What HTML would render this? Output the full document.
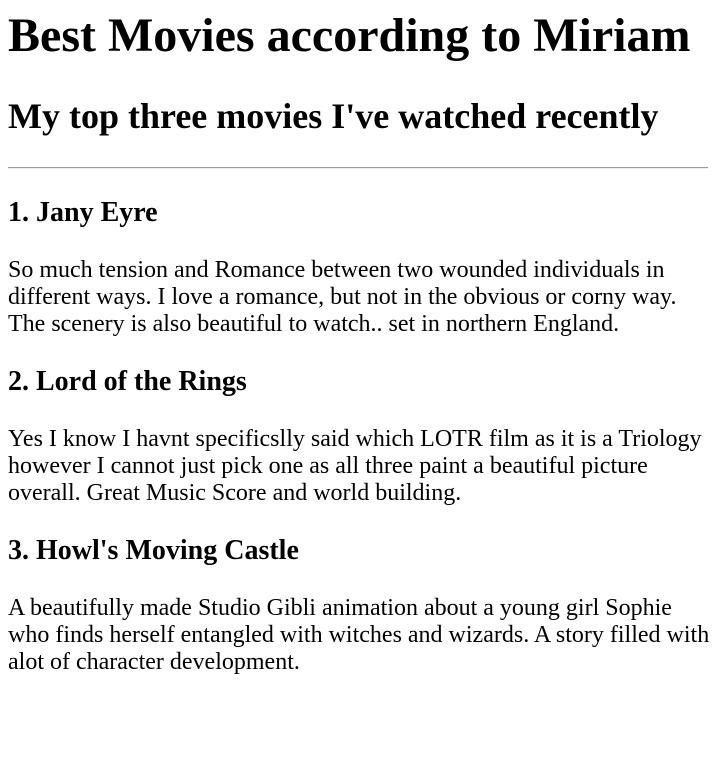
<!DOCTYPE html>
<html><head><meta charset="utf-8"><style>
body{margin:8px 0 8px 8px;font-family:"Times New Roman","Liberation Serif",Times,serif;font-size:24px;color:#000;background:#fff}
h1{font-size:48px;margin:0 0 32px}
h2{font-size:36px;margin:30px 0}
h3{font-size:28px;margin:28px 0}
p{margin:24px 0}
hr{margin:12px 8px 12px 0;border:0;border-top:1px solid #9a9a9a;border-bottom:1px solid #eee;height:0}
</style></head><body>
<h1>Best Movies according to Miriam</h1>
<h2>My top three movies I've watched recently</h2>
<hr>
<h3>1. Jany Eyre</h3>
<p>So much tension and Romance between two wounded individuals in<br>different ways. I love a romance, but not in the obvious or corny way.<br>The scenery is also beautiful to watch.. set in northern England.</p>
<h3>2. Lord of the Rings</h3>
<p>Yes I know I havnt specificslly said which LOTR film as it is a Triology<br>however I cannot just pick one as all three paint a beautiful picture<br>overall. Great Music Score and world building.</p>
<h3>3. Howl's Moving Castle</h3>
<p style="white-space:nowrap">A beautifully made Studio Gibli animation about a young girl Sophie<br>who finds herself entangled with witches and wizards. A story filled with<br>alot of character development.</p>
</body></html>
